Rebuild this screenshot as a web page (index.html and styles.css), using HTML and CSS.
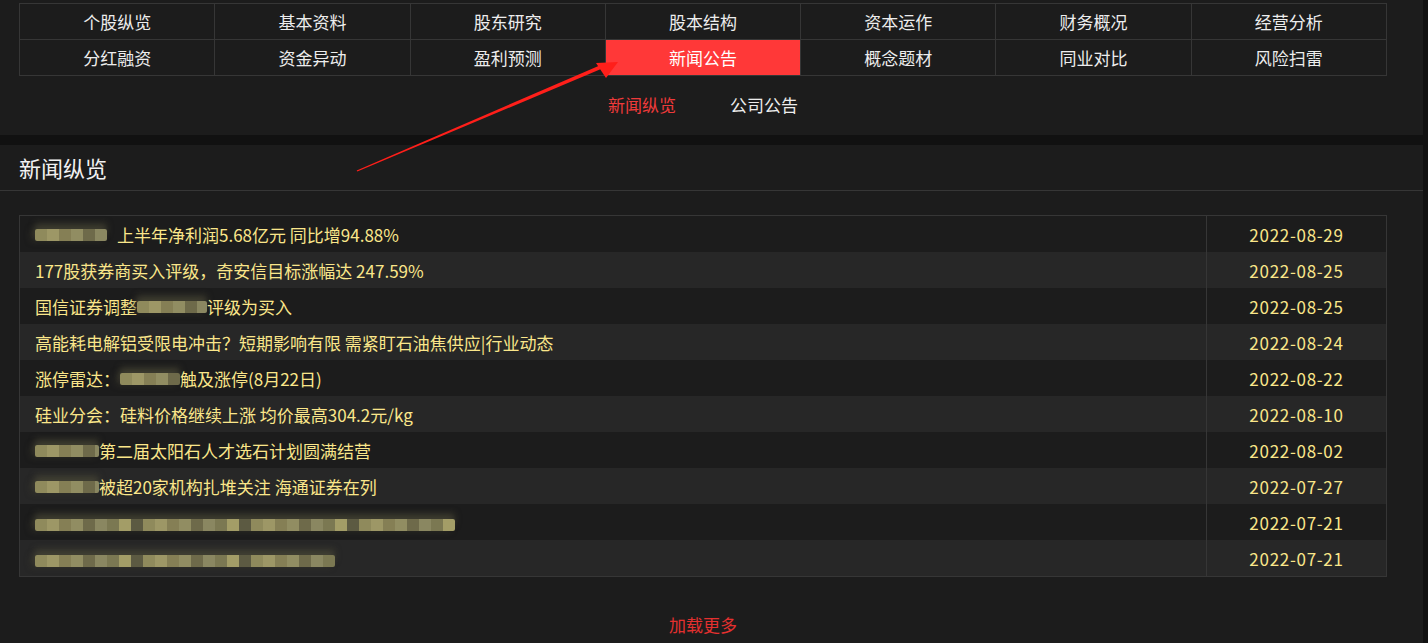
FILE: index.html
```html
<!DOCTYPE html>
<html lang="zh-CN">
<head>
    <meta charset="UTF-8">
    <meta name="viewport" content="width=device-width, initial-scale=1.0">
    <title>新闻公告</title>
    <link rel="stylesheet" href="styles.css">
</head>
<body>
    <div class="page">
        <div class="top-section">
            <div class="nav-grid">
                <div class="nav-cell">个股纵览</div>
                <div class="nav-cell">基本资料</div>
                <div class="nav-cell">股东研究</div>
                <div class="nav-cell">股本结构</div>
                <div class="nav-cell">资本运作</div>
                <div class="nav-cell">财务概况</div>
                <div class="nav-cell">经营分析</div>
                <div class="nav-cell">分红融资</div>
                <div class="nav-cell">资金异动</div>
                <div class="nav-cell">盈利预测</div>
                <div class="nav-cell active">新闻公告</div>
                <div class="nav-cell">概念题材</div>
                <div class="nav-cell">同业对比</div>
                <div class="nav-cell">风险扫雷</div>
            </div>
            <div class="sub-tabs">
                <div class="sub-tab current">新闻纵览</div>
                <div class="sub-tab">公司公告</div>
            </div>
        </div>

        <div class="news-section">
            <div class="section-title">新闻纵览</div>

            <div class="news-table">
                <div class="news-row">
                    <div class="news-title"><span class="mosaic w72"></span><span class="gap"></span>上半年净利润5.68亿元 同比增94.88%</div>
                    <div class="news-date">2022-08-29</div>
                </div>
                <div class="news-row">
                    <div class="news-title">177股获券商买入评级，奇安信目标涨幅达 247.59%</div>
                    <div class="news-date">2022-08-25</div>
                </div>
                <div class="news-row">
                    <div class="news-title">国信证券调整<span class="mosaic w70"></span>评级为买入</div>
                    <div class="news-date">2022-08-25</div>
                </div>
                <div class="news-row">
                    <div class="news-title">高能耗电解铝受限电冲击？短期影响有限 需紧盯石油焦供应|行业动态</div>
                    <div class="news-date">2022-08-24</div>
                </div>
                <div class="news-row">
                    <div class="news-title">涨停雷达：<span class="mosaic w60"></span>触及涨停(8月22日)</div>
                    <div class="news-date">2022-08-22</div>
                </div>
                <div class="news-row">
                    <div class="news-title">硅业分会：硅料价格继续上涨 均价最高304.2元/kg</div>
                    <div class="news-date">2022-08-10</div>
                </div>
                <div class="news-row">
                    <div class="news-title"><span class="mosaic w64"></span>第二届太阳石人才选石计划圆满结营</div>
                    <div class="news-date">2022-08-02</div>
                </div>
                <div class="news-row">
                    <div class="news-title"><span class="mosaic w64"></span>被超20家机构扎堆关注 海通证券在列</div>
                    <div class="news-date">2022-07-27</div>
                </div>
                <div class="news-row">
                    <div class="news-title"><span class="mosaic w420 tall"></span></div>
                    <div class="news-date">2022-07-21</div>
                </div>
                <div class="news-row">
                    <div class="news-title"><span class="mosaic w300 tall"></span></div>
                    <div class="news-date">2022-07-21</div>
                </div>
            </div>

            <div class="load-more">加载更多</div>
        </div>
    </div>

    <!-- 标注箭头 -->
    <svg class="arrow" width="1428" height="643" viewBox="0 0 1428 643">
        <polygon points="356.7,170.4 357.3,171.6 601.6,68.8 600.2,65.2" fill="#ff1f1a"/>
        <polygon points="618,62 596,63 606,78" fill="#ff1f1a"/>
    </svg>
</body>
</html>
```

FILE: styles.css
```css
* {
    margin: 0;
    padding: 0;
    box-sizing: border-box;
}

body {
    width: 1428px;
    height: 643px;
    background: #111111;
    font-family: "Noto Sans CJK SC", "Microsoft YaHei", sans-serif;
    overflow: hidden;
    position: relative;
}

.page {
    width: 1423px;
}

.top-section {
    background: #1c1c1c;
    height: 135px;
    padding: 3px 0 0 19px;
}

.nav-grid {
    width: 1368px;
    display: grid;
    grid-template-columns: repeat(7, 1fr);
    border-top: 1px solid #363636;
    border-left: 1px solid #363636;
}

.nav-cell {
    height: 36px;
    line-height: 35px;
    text-align: center;
    color: #ededed;
    font-size: 17px;
    border-right: 1px solid #363636;
    border-bottom: 1px solid #363636;
}

.nav-cell.active {
    background: #ff3838;
    color: #ffffff;
}

.sub-tabs {
    width: 1368px;
    display: flex;
    justify-content: center;
    gap: 54px;
    margin-top: 17px;
}

.sub-tab {
    color: #ededed;
    font-size: 17px;
    line-height: 24px;
}

.sub-tab.current {
    color: #ef3a3a;
}

.news-section {
    background: #1c1c1c;
    margin-top: 10px;
    height: 498px;
}

.section-title {
    color: #f2f2f2;
    font-size: 22px;
    line-height: 28px;
    padding: 8px 19px 9px;
    border-bottom: 1px solid #363636;
}

.news-table {
    width: 1368px;
    margin: 24px 0 0 19px;
    border: 1px solid #363636;
}

.news-row {
    display: flex;
    height: 36px;
}

.news-row:nth-child(even) {
    background: #272727;
}

.news-title {
    flex: 1;
    display: flex;
    align-items: center;
    padding-left: 15px;
    color: #fae68a;
    font-size: 17px;
    white-space: nowrap;
}

.news-date {
    width: 180px;
    border-left: 1px solid #363636;
    display: flex;
    align-items: center;
    justify-content: center;
    color: #fae68a;
    font-size: 17px;
    letter-spacing: 0.7px;
}

/* 打码块 */
.mosaic {
    display: inline-block;
    height: 12px;
    margin-top: 2px;
    background-image:
        linear-gradient(90deg,
            #8f8a5c 0 12px, #9d9766 12px 24px, #857f55 24px 36px,
            #918d62 36px 48px, #6e6a4a 48px 60px, #8a8761 60px 72px,
            #7b7852 72px 84px, #a39d67 84px 96px, #5c5a42 96px 108px);
    background-size: 108px 100%;
    box-shadow: 0 -6px 6px rgba(80, 78, 58, 0.55), -4px 0 6px rgba(70, 68, 52, 0.5);
    border-radius: 2px;
}

.mosaic.tall {
    margin-top: 6px;
}

.gap {
    display: inline-block;
    width: 10px;
}

.w60 { width: 60px; }
.w64 { width: 64px; }
.w70 { width: 70px; }
.w72 { width: 72px; }
.w300 { width: 300px; }
.w420 { width: 420px; }

.load-more {
    text-align: center;
    color: #e4302f;
    font-size: 17px;
    line-height: 24px;
    margin-top: 36px;
    width: 1406px;
}

.arrow {
    position: absolute;
    left: 0;
    top: 0;
    pointer-events: none;
}
```
